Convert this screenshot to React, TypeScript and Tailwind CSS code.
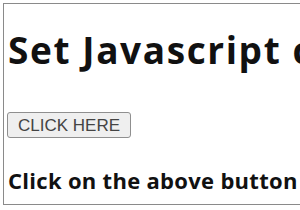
export default function App() {
  return (
    <div className="w-[300px] h-[210px] overflow-hidden bg-white">
      <div
        className="ml-[3px] mt-[3px] w-[320px] h-[202px] border border-[#8a8a8a] bg-white pl-[4px]"
        style={{ fontFamily: '"Open Sans", "Noto Sans", sans-serif' }}
      >
        <h1 className="mt-[26px] text-[37px] font-bold leading-[40px] tracking-[1.6px] text-[#111] whitespace-nowrap">
          Set Javascript click event
        </h1>
        <button
          className="mt-[42px] -ml-[1px] h-[26px] w-[124px] border border-[#8f8f8f] rounded-[3px] bg-[#efefef] text-[17px] leading-none text-[#444]"
          style={{ fontFamily: '"Liberation Sans", Arial, sans-serif' }}
        >
          CLICK HERE
        </button>
        <p className="mt-[28px] text-[22px] font-bold leading-[28px] tracking-[0.3px] text-[#111] whitespace-nowrap">
          Click on the above button
        </p>
      </div>
    </div>
  );
}
